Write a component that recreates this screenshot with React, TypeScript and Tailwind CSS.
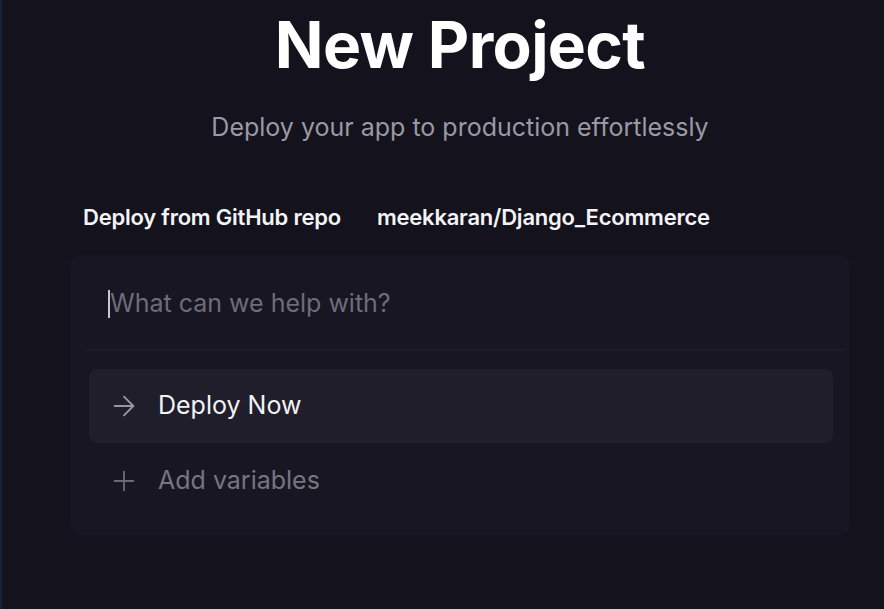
import { ArrowRight, Plus } from "lucide-react";

export default function App() {
  return (
    <div
      className="relative w-[884px] h-[609px] overflow-hidden bg-[#13121d] text-white"
      style={{ fontFamily: "Inter, 'Liberation Sans', sans-serif" }}
    >
      <div className="absolute left-0 top-0 h-full w-[4px] bg-gradient-to-r from-[#172540] to-[#13121d]" />

      <div className="pl-[36px]">
        <div className="flex flex-col items-center">
          <h1 className="mt-[9px] text-[64px] leading-[72px] font-bold tracking-[-0.01em] text-white">
            New Project
          </h1>
          <p className="mt-[31px] text-[25px] leading-[30px] text-[#9b99a4]">
            Deploy your app to production effortlessly
          </p>
        </div>

        <div className="mt-[61px] flex items-center gap-[36px] pl-[47px] text-[22px] leading-[28px] font-semibold tracking-[-0.01em] text-[#f4f4f6]">
          <span>Deploy from GitHub repo</span>
          <span>meekkaran/Django_Ecommerce</span>
        </div>

        <div className="mx-[34px] mt-[24px] h-[280px] rounded-[10px] bg-[#171622] pl-[15px] pr-[5px] pt-[33px]">
          <div className="flex h-[31px] items-center pl-[23px]">
            <span className="h-[28px] w-[2px] bg-[#c9c8d0]" />
            <span className="text-[25px] text-[#6e6c78]">What can we help with?</span>
          </div>
          <div className="mt-[30px] h-[1px] bg-[#21202b]" />
          <div className="mt-[19px] mr-[12px] ml-[4px] flex h-[74px] items-center gap-[18px] rounded-[8px] bg-[#1f1e2a] pl-[19px]">
            <ArrowRight size={32} strokeWidth={1.4} className="text-[#9896a0]" />
            <span className="text-[25px] text-[#f2f2f5]">Deploy Now</span>
          </div>
          <div className="flex h-[76px] items-center gap-[18px] pl-[23px]">
            <Plus size={32} strokeWidth={1.4} className="text-[#6b6975]" />
            <span className="text-[25px] text-[#77757f]">Add variables</span>
          </div>
        </div>
      </div>
    </div>
  );
}
